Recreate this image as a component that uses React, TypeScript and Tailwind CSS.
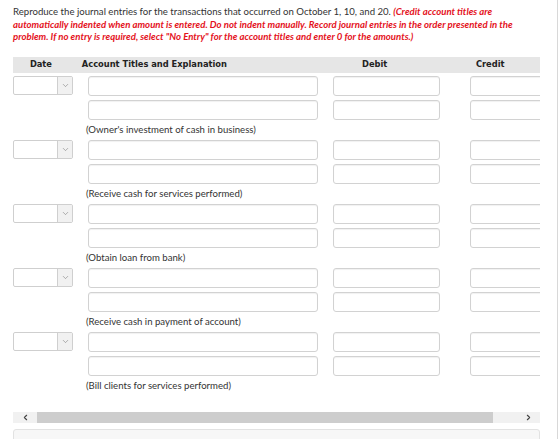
import { ChevronDown, ChevronLeft, ChevronRight } from 'lucide-react';

const entries = [
  "(Owner's investment of cash in business)",
  '(Receive cash for services performed)',
  '(Obtain loan from bank)',
  '(Receive cash in payment of account)',
  '(Bill clients for services performed)',
];

function DateSelect() {
  return (
    <div className="flex h-[19px] w-[60px] shrink-0 overflow-hidden rounded-[2px] border border-[#cfcfcf] bg-white">
      <div className="flex-1" />
      <div className="flex w-[15px] items-center justify-center border-l border-[#cfcfcf] bg-[#f1f1f1]">
        <ChevronDown size={9} strokeWidth={1.5} className="text-[#777]" />
      </div>
    </div>
  );
}

function Field({ width }: { width: string }) {
  return (
    <div
      className={`h-[20px] shrink-0 rounded-[3px] border border-[#d2d2d2] bg-white shadow-[inset_0_1px_1px_rgba(0,0,0,0.06)] ${width}`}
    />
  );
}

function EntryBlock({ label }: { label: string }) {
  return (
    <div className="flex h-[64px] flex-col">
      {/* first line: date + account + amounts */}
      <div className="flex gap-[15px]">
        <DateSelect />
        <Field width="w-[230px]" />
        <Field width="w-[107px]" />
        <div className="w-px" />
        <Field width="w-[107px]" />
      </div>
      {/* second line: credit account, no date */}
      <div className="mt-[4px] flex gap-[15px]">
        <div className="w-[60px] shrink-0" />
        <Field width="w-[230px]" />
        <Field width="w-[107px]" />
        <div className="w-px" />
        <Field width="w-[107px]" />
      </div>
      <div className="mt-[4px] pl-[73px] text-[9.6px] leading-[12px] text-[#333]">{label}</div>
    </div>
  );
}

export default function App() {
  return (
    <div className="h-[439px] w-[558px] overflow-hidden border-r border-[#d8d8d8] bg-white font-['Lato',sans-serif]">
      <div className="w-[540px] pl-[13px]">
        <p className="pt-[6px] text-[9.6px] leading-[12.5px] text-[#333]">
          Reproduce the journal entries for the transactions that occurred on October 1, 10, and 20.{' '}
          <span className="font-bold italic text-[#e4121c]">
            (Credit account titles are automatically indented when amount is entered. Do not indent
            manually. Record journal entries in the order presented in the problem. If no entry is
            required, select "No Entry" for the account titles and enter 0 for the amounts.)
          </span>
        </p>

        {/* journal table, scrolled horizontally */}
        <div className="mt-[13px] w-[527px] overflow-hidden">
          <div className="flex h-[16px] w-[527px] items-center bg-[#e6e6e6] font-['DejaVu_Sans',sans-serif] text-[8.3px] font-bold text-[#222]">
            <div className="w-[60px] text-center">Date</div>
            <div className="ml-[13px] w-[245px]">Account Titles and Explanation</div>
            <div className="ml-[15px] w-[107px] text-center">Debit</div>
            <div className="ml-[16px] w-[107px] text-center">Credit</div>
          </div>
          <div className="mt-[3px] w-[560px]">
            {entries.map((e) => (
              <EntryBlock key={e} label={e} />
            ))}
          </div>
        </div>

        {/* horizontal scrollbar */}
        <div className="mt-[16px] flex h-[11px] w-[527px] items-center bg-[#f1f1f1]">
          <div className="flex w-[24px] justify-center">
            <ChevronLeft size={9} strokeWidth={3} className="text-[#444]" />
          </div>
          <div className="h-full w-[456px] bg-[#cdcdcd]" />
          <div className="flex-1" />
          <div className="flex w-[24px] justify-center">
            <ChevronRight size={9} strokeWidth={3} className="text-[#444]" />
          </div>
        </div>

        {/* media panel below the table */}
        <div className="mt-[6px] h-[40px] w-[527px] rounded-t-[3px] border border-[#e2e2e2] bg-[#f7f7f7] px-[14px] pt-[6px] text-[11px] font-bold text-[#444]">
          Textbook and Media
        </div>
      </div>
    </div>
  );
}
